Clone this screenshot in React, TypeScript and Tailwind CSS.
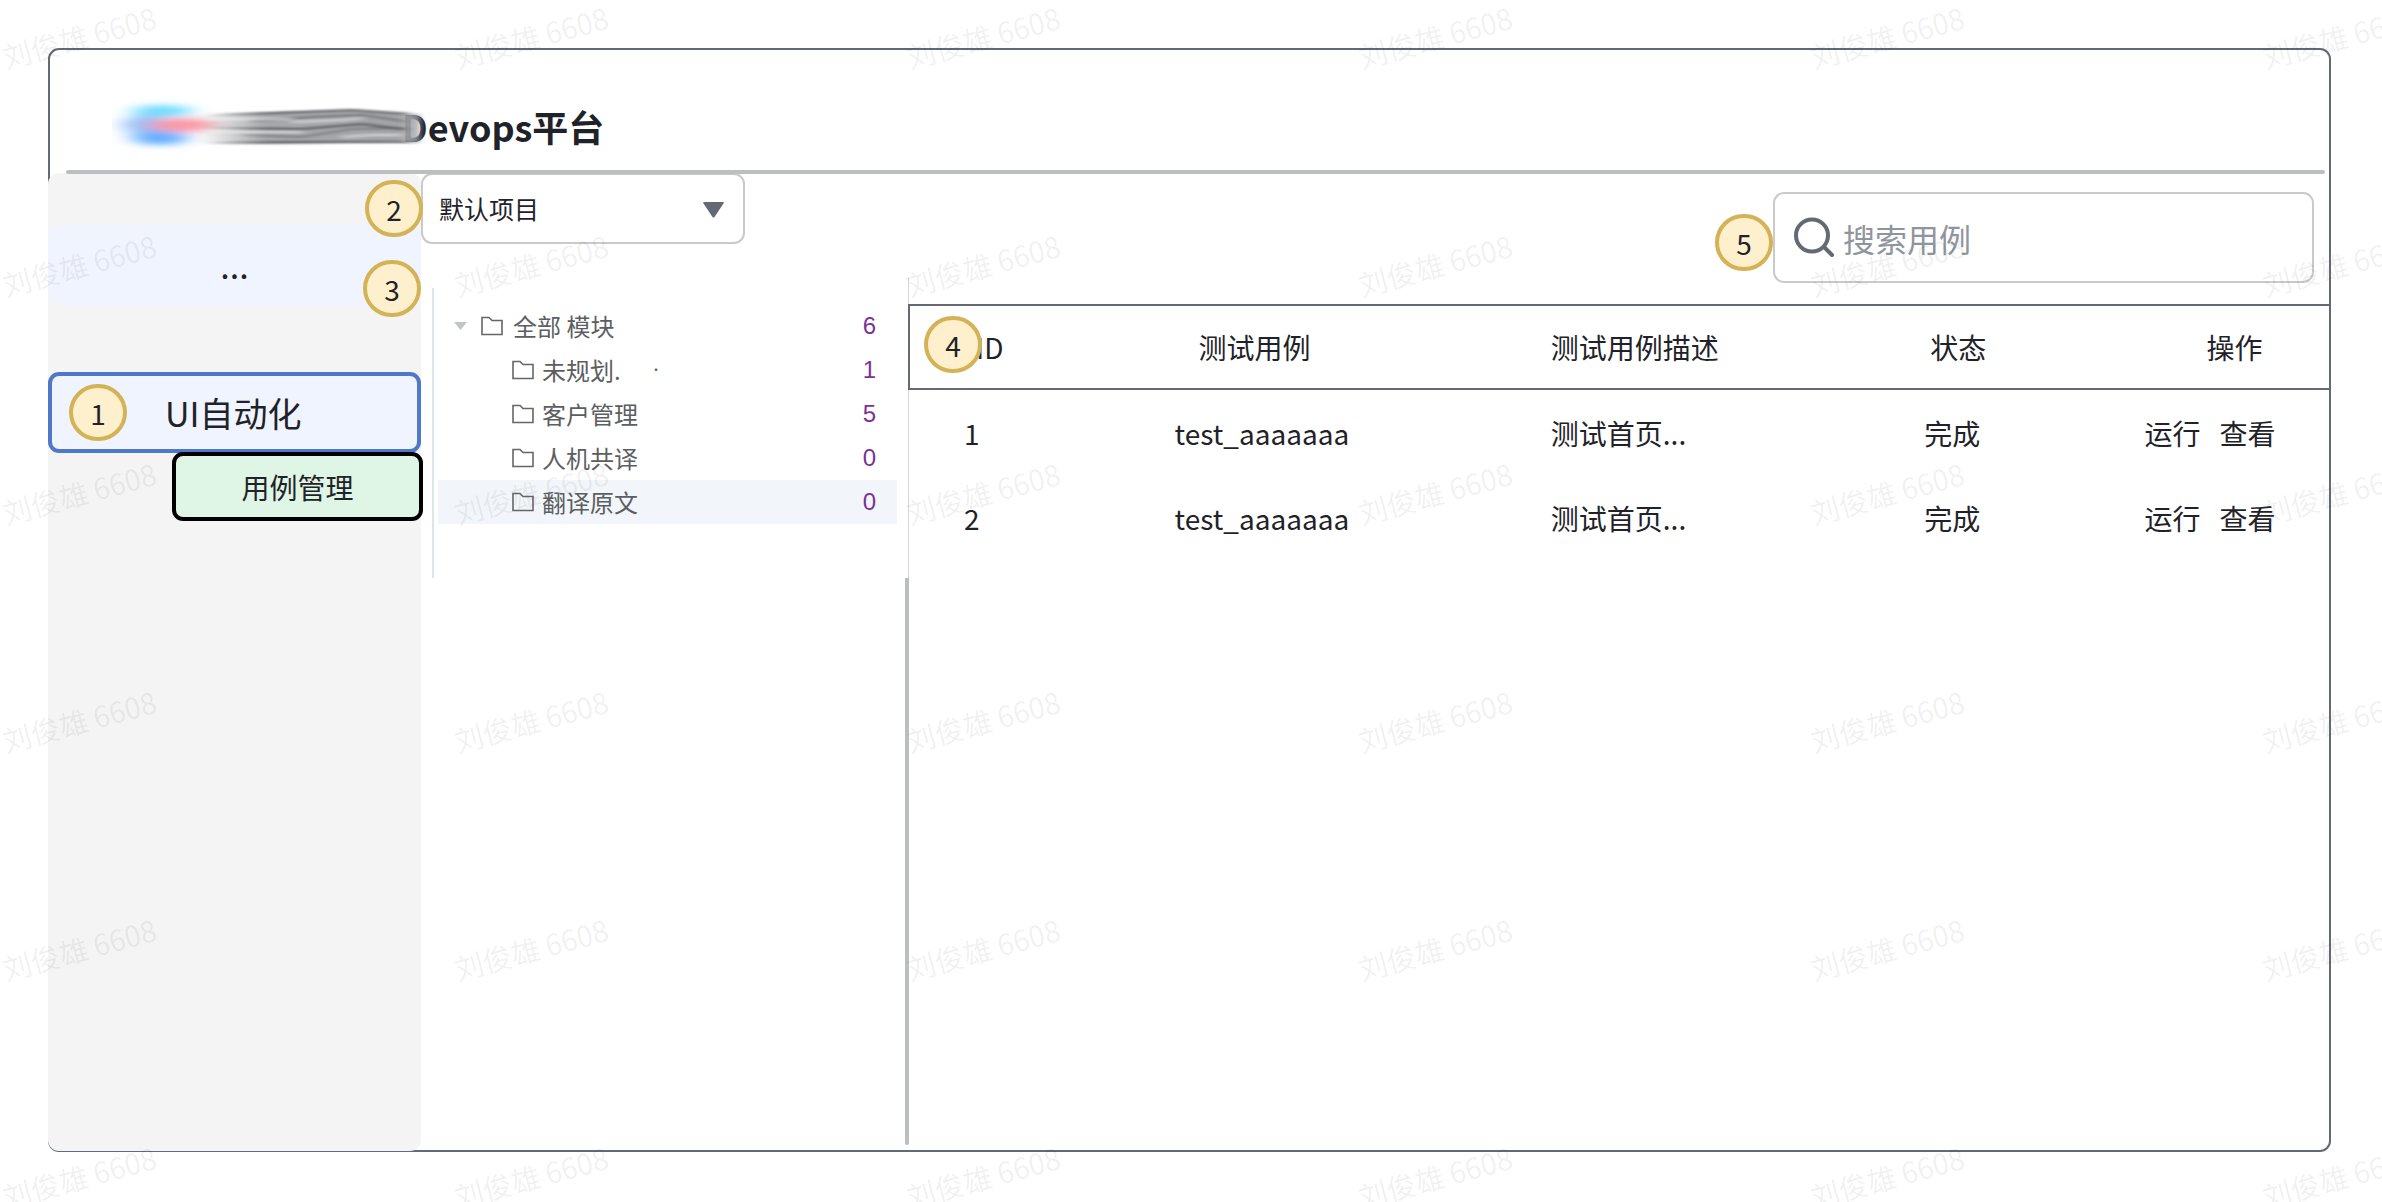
import type { ReactNode } from "react";

const MARKS = Array.from({ length: 36 }, (_, i) => i);

const MODULES = [
  { name: "未规划.", note: "·", count: 1, selected: false },
  { name: "客户管理", note: "", count: 5, selected: false },
  { name: "人机共译", note: "", count: 0, selected: false },
  { name: "翻译原文", note: "", count: 0, selected: true },
];

const CASES = [
  { id: 1, name: "test_aaaaaaa", desc: "测试首页...", status: "完成" },
  { id: 2, name: "test_aaaaaaa", desc: "测试首页...", status: "完成" },
];

function Badge({ children, className }: { children: ReactNode; className: string }) {
  return (
    <span
      className={`z-20 flex h-[57px] w-[58px] shrink-0 items-center justify-center rounded-full border-4 border-[#d4b256] bg-[#fef0cc] text-[28px] leading-none text-[#1f2329] ${className}`}
    >
      {children}
    </span>
  );
}

function Watermark() {
  return (
    <div
      aria-hidden="true"
      className="pointer-events-none absolute inset-0 z-30 grid auto-rows-[228px] grid-cols-[repeat(6,452px)] overflow-hidden"
    >
      {MARKS.map((i) => (
        <div key={i} className="pt-4">
          <span className="inline-block w-[158px] -rotate-[15deg] text-center text-[29px] leading-10 whitespace-nowrap text-[#1f2329]/[0.07]">
            刘俊雄 6608
          </span>
        </div>
      ))}
    </div>
  );
}

function SmudgedLogo() {
  return (
    <svg width="320" height="60" viewBox="110 95 320 60" className="relative z-10" aria-hidden="true">
      <defs>
        <filter id="soft" x="-30%" y="-60%" width="160%" height="220%">
          <feGaussianBlur stdDeviation="11 3" />
        </filter>
        <filter id="streak" x="-10%" y="-60%" width="120%" height="220%">
          <feGaussianBlur stdDeviation="5 1" />
        </filter>
        <filter id="haze" x="-60%" y="-60%" width="220%" height="220%">
          <feGaussianBlur stdDeviation="3 1" />
        </filter>
        <linearGradient id="ink" gradientUnits="userSpaceOnUse" x1="195" y1="0" x2="420" y2="0">
          <stop offset="0" stopColor="#97999d" stopOpacity="0" />
          <stop offset="0.3" stopColor="#97999d" stopOpacity="0.85" />
          <stop offset="0.9" stopColor="#97999d" stopOpacity="0.9" />
          <stop offset="1" stopColor="#a5a7ab" stopOpacity="0.5" />
        </linearGradient>
        <linearGradient id="dark" gradientUnits="userSpaceOnUse" x1="205" y1="0" x2="420" y2="0">
          <stop offset="0" stopColor="#3c3e43" stopOpacity="0" />
          <stop offset="0.3" stopColor="#3c3e43" stopOpacity="0.85" />
          <stop offset="1" stopColor="#3c3e43" stopOpacity="0.8" />
        </linearGradient>
      </defs>
      <g filter="url(#soft)">
        <ellipse cx="160" cy="110" rx="30" ry="6" fill="#6fdcff" />
        <ellipse cx="144" cy="124" rx="22" ry="10" fill="#8fbff8" />
        <ellipse cx="158" cy="137" rx="28" ry="7" fill="#66b0ff" />
        <ellipse cx="180" cy="124" rx="34" ry="7" fill="#fb98a6" />
      </g>
      <g filter="url(#streak)">
        <path d="M195 114 L270 111 L350 109 L402 112 L414 117 L412 139 L404 141 L300 143 L195 143 Z" fill="url(#ink)" />
        <g fill="none" stroke="url(#dark)" strokeWidth="2">
          <path d="M202 114 L270 112 L350 109 L408 113" />
          <path d="M205 127 L300 128 L360 123 L408 129" />
          <path d="M205 142 L300 141 L408 141" />
          <path d="M250 120 L310 116 L360 114 L408 121" strokeOpacity="0.6" />
          <path d="M240 134 L300 136 L350 128 L408 127" strokeOpacity="0.5" />
        </g>
        <g fill="none" stroke="#f2f3f4" strokeWidth="2" strokeOpacity="0.6">
          <path d="M205 130 L250 131 L300 131" />
          <path d="M205 118 L250 118 L290 118" />
          <path d="M290 121 L340 119 L360 117" />
          <path d="M340 136 L370 134 L400 134" />
        </g>
      </g>
      <rect x="402" y="113" width="16" height="29" fill="#a4a6aa" fillOpacity="0.7" filter="url(#haze)" />
    </svg>
  );
}

function Folder() {
  return (
    <svg width="22" height="20" viewBox="0 0 22 20" fill="none" className="shrink-0" aria-hidden="true">
      <path d="M1 18.5 V1.5 H8 L11 4.5 H21 V18.5 Z" stroke="#666" strokeWidth="1.6" />
    </svg>
  );
}

function Tree() {
  return (
    <ul className="mr-2 ml-[11px] flex h-[290px] flex-col border-l-2 border-[#dde7e8] pt-4 pl-1 text-[24px] leading-[42px] text-[#5c5e61]">
      <li className="flex h-[44px] items-center pr-[21px] pl-4">
        <svg width="13" height="8" viewBox="0 0 13 8" className="mr-[14px]" aria-hidden="true">
          <path d="M0 0 H13 L6.5 8 Z" fill="#c0c4cc" />
        </svg>
        <Folder />
        <span className="ml-2.5 grow">全部 模块</span>
        <span className="font-['Liberation_Sans',sans-serif] text-[#7b3295]">6</span>
      </li>
      {MODULES.map((m) => (
        <li
          key={m.name}
          className={`flex h-[44px] items-center pr-[21px] pl-[74px] ${m.selected ? "bg-[#f2f6fa]" : ""}`}
        >
          <Folder />
          <span className="ml-2 w-[108px]">{m.name}</span>
          <span className="grow text-[12px]">{m.note}</span>
          <span className="font-['Liberation_Sans',sans-serif] text-[#7b3295]">{m.count}</span>
        </li>
      ))}
    </ul>
  );
}

export default function App() {
  return (
    <div className="relative flex min-h-screen flex-col overflow-hidden bg-white pt-12 pr-[51px] pb-[50px] pl-12 font-['Noto_Sans_CJK_SC',sans-serif] text-[#1f2329]">
      <div className="flex grow flex-col rounded-[11px] border-2 border-[#646a73]">
        <header className="flex h-[120px] items-center pt-8 pl-[62px]">
          <SmudgedLogo />
          <h1 className="-ml-[30px] text-[36px] leading-[52px] font-bold">Devops平台</h1>
        </header>
        <div className="relative z-10 mr-1 -mb-px ml-4 h-1 rounded-full bg-[#bbbfc4]" />

        <div className="flex grow">
          <aside className="relative -mb-px -ml-0.5 flex w-[373px] shrink-0 flex-col rounded-[11px] bg-[#f4f4f4] pt-[52px]">
            <Badge className="absolute top-[7px] -right-0.5">2</Badge>
            <Badge className="absolute top-[87px] right-0">3</Badge>
            <button className="h-20 rounded-[11px] bg-[#f0f4fe] text-[34px] leading-[50px]">...</button>
            <button className="relative mt-[67px] flex h-[81px] items-center rounded-[11px] border-4 border-[#5078c8] bg-[#f0f4fe] pl-[17px] text-[34px] leading-[50px]">
              <Badge className="">1</Badge>
              <span className="ml-[38px]">UI自动化</span>
            </button>
            <button className="relative -mr-0.5 -mt-px h-[69px] w-[251px] self-end rounded-[11px] border-4 border-black bg-[#dff5e5] text-[28px] leading-[40px]">
              用例管理
            </button>
          </aside>

          <main className="flex grow">
            <div className="flex w-[484px] shrink-0 flex-col">
              <label className="relative mb-[44px] w-[324px]">
                <span className="sr-only">项目</span>
                <select className="h-[71px] w-full appearance-none rounded-[11px] border-2 border-[#c9cacc] bg-white pl-4 text-[25px] text-[#1f2329]">
                  <option>默认项目</option>
                </select>
                <svg width="21" height="16" viewBox="0 0 21 16" className="pointer-events-none absolute top-[29px] right-[21px]" aria-hidden="true">
                  <path d="M1 0 H20 Q21.500 0 20.500 1.500 L11.500 15 Q10.500 16 9.500 15 L0.500 1.500 Q-0.500 0 1 0 Z" fill="#646a73" />
                </svg>
              </label>
              <Tree />
            </div>

            <div className="flex w-1 shrink-0 flex-col items-end pt-[105px] pb-[5px]">
              <div className="h-[300px] w-px bg-[#d3d6d9]" />
              <div className="w-1 grow rounded-b-full bg-[#bbbfc4]" />
            </div>

            <div className="flex grow flex-col">
              <div className="mr-[15px] flex h-[131px] justify-end pt-[19px]">
                <Badge className="mt-[22px]">5</Badge>
                <label className="flex h-[91px] w-[541px] items-center rounded-[11px] border-2 border-[#c9cacc] pl-[19px]">
                  <svg width="41" height="42" viewBox="0 0 41 42" fill="none" stroke="#646a73" strokeWidth="4" strokeLinecap="round" aria-hidden="true">
                    <circle cx="18" cy="18.500" r="16" />
                    <path d="M30 30 L38 38" />
                  </svg>
                  <input
                    aria-label="搜索用例"
                    placeholder="搜索用例"
                    className="ml-2 min-w-0 grow bg-transparent text-[32px] leading-[46px] outline-none placeholder:text-[#8f959e]"
                  />
                </label>
              </div>

              <div className="relative -ml-px">
                <Badge className="absolute top-[12px] left-4">4</Badge>
                <table className="w-full table-fixed border-collapse text-left text-[28px] leading-10">
                  <colgroup>
                    <col className="w-[18.7%]" />
                    <col className="w-[26.5%]" />
                    <col className="w-[26.3%]" />
                    <col className="w-[15.5%]" />
                    <col className="w-[13%]" />
                  </colgroup>
                  <thead>
                    <tr className="h-[84px] border-2 border-r-0 border-[#646a73]">
                      <th className="pl-[66px] font-normal">ID</th>
                      <th className="pl-6 font-normal">测试用例</th>
                      <th className="font-normal">测试用例描述</th>
                      <th className="pl-1.5 font-normal">状态</th>
                      <th className="pl-[62px] font-normal">操作</th>
                    </tr>
                  </thead>
                  <tbody>
                    {CASES.map((c) => (
                      <tr key={c.id} className="h-[86px]">
                        <td className="pl-[55px]">{c.id}</td>
                        <td>{c.name}</td>
                        <td>{c.desc}</td>
                        <td>{c.status}</td>
                        <td>
                          <div className="flex gap-[19px]">
                            <button>运行</button>
                            <button>查看</button>
                          </div>
                        </td>
                      </tr>
                    ))}
                  </tbody>
                </table>
              </div>
            </div>
          </main>
        </div>
      </div>
      <Watermark />
    </div>
  );
}
